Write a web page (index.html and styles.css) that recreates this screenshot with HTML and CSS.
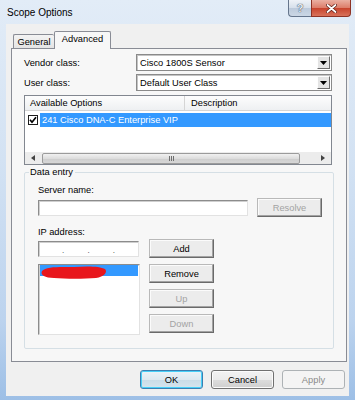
FILE: index.html
```html
<!DOCTYPE html>
<html lang="en">
<head>
  <meta charset="UTF-8" />
  <title>Scope Options</title>
  <link rel="stylesheet" href="styles.css">
</head>
<body>
  <div class="window">
    <div class="titlebar">
      <span class="caption">Scope Options</span>
      <div class="cap-buttons">
        <div class="cap-btn help">?</div>
        <div class="cap-btn close">
          <svg width="11" height="9" viewBox="0 0 11 9">
            <path d="M1.5 1 L9.5 8 M9.5 1 L1.5 8" stroke="#5a1a10" stroke-width="3.2" stroke-linecap="round"/>
            <path d="M1.5 1 L9.5 8 M9.5 1 L1.5 8" stroke="#fff" stroke-width="1.8" stroke-linecap="round"/>
          </svg>
        </div>
      </div>
    </div>

    <div class="client">
      <div class="tabs">
        <div class="tab general">General</div>
        <div class="tab active">Advanced</div>
      </div>

      <div class="panel">
        <div class="field-row">
          <span class="field-label">Vendor class:</span>
          <div class="combo">
            <span class="combo-text">Cisco 1800S Sensor</span>
            <span class="combo-btn">
              <svg width="7" height="4" viewBox="0 0 7 4"><path d="M0 0 H7 L3.5 4 Z" fill="#000"/></svg>
            </span>
          </div>
        </div>
        <div class="field-row">
          <span class="field-label">User class:</span>
          <div class="combo">
            <span class="combo-text">Default User Class</span>
            <span class="combo-btn">
              <svg width="7" height="4" viewBox="0 0 7 4"><path d="M0 0 H7 L3.5 4 Z" fill="#000"/></svg>
            </span>
          </div>
        </div>

        <div class="listview">
          <div class="lv-header">
            <div class="lv-col name">Available Options</div>
            <div class="lv-col desc">Description</div>
          </div>
          <div class="lv-body">
            <div class="lv-row">
              <span class="check">
                <svg width="8" height="8" viewBox="0 0 8 8"><path d="M1 3.8 L3 6.2 L7 1.2" stroke="#000" stroke-width="1.7" fill="none"/></svg>
              </span>
              <span class="lv-sel">241 Cisco DNA-C Enterprise VIP</span>
            </div>
          </div>
          <div class="hscroll">
            <span class="sb-arrow">
              <svg width="4" height="6" viewBox="0 0 4 6"><path d="M4 0 V6 L0 3 Z" fill="#444"/></svg>
            </span>
            <span class="sb-thumb"><span class="grip"></span><span class="grip"></span><span class="grip"></span></span>
            <span class="sb-track"></span>
            <span class="sb-arrow">
              <svg width="4" height="6" viewBox="0 0 4 6"><path d="M0 0 V6 L4 3 Z" fill="#444"/></svg>
            </span>
          </div>
        </div>

        <fieldset class="group">
          <legend>Data entry</legend>
          <div class="group-label">Server name:</div>
          <div class="input-row">
            <div class="textbox server"></div>
            <div class="btn disabled">Resolve</div>
          </div>
          <div class="group-label ip-label">IP address:</div>
          <div class="input-row ip-row">
            <div class="textbox ip">
              <span class="seg"></span><span class="dot">.</span>
              <span class="seg"></span><span class="dot">.</span>
              <span class="seg"></span><span class="dot">.</span>
              <span class="seg"></span>
            </div>
            <div class="btn">Add</div>
          </div>
          <div class="lower-row">
            <div class="listbox">
              <div class="lb-sel">
                <svg class="redact" width="68" height="15" viewBox="0 0 68 15">
                  <path d="M2 6 C6 1 22 2 34 2 C46 1 60 1 65 4 C68 7 64 12 56 13 C44 14 26 14 14 13 C5 13 0 10 2 6 Z" fill="#e8161c"/>
                </svg>
              </div>
            </div>
            <div class="side-buttons">
              <div class="btn">Remove</div>
              <div class="btn disabled">Up</div>
              <div class="btn disabled">Down</div>
            </div>
          </div>
        </fieldset>
      </div>

      <div class="dialog-buttons">
        <div class="dbtn default">OK</div>
        <div class="dbtn">Cancel</div>
        <div class="dbtn disabled">Apply</div>
      </div>
    </div>
  </div>
</body>
</html>
```

FILE: styles.css
```css
body {
  margin: 0;
  font-family: "Liberation Sans", Arial, sans-serif;
  font-size: 9.3px;
  color: #000;
}

.window {
  width: 355px;
  height: 400px;
  display: flex;
  flex-direction: column;
  background: linear-gradient(to bottom, #e2ecf7 0, #d3e2f3 40%, #bcd3ee 80%, #9dbfe6 100%);
}

/* title bar */

.titlebar {
  height: 24px;
  display: flex;
  align-items: flex-start;
}

.caption {
  flex: 1;
  margin: 7px 0 0 7px;
  font-size: 10px;
  line-height: 12px;
}

.cap-buttons {
  display: flex;
  margin-right: 4px;
}

.cap-btn {
  height: 17px;
  box-sizing: border-box;
  border: 1px solid #65758c;
  border-top: none;
  display: flex;
  align-items: center;
  justify-content: center;
}

.help {
  width: 23px;
  border-right: none;
  border-radius: 0 0 0 4px;
  background: linear-gradient(to bottom, #eef2f7 0, #d6dfea 50%, #bccadb 51%, #cbd7e5 100%);
  color: #e9eef5;
  font-weight: bold;
  font-size: 11px;
  text-shadow: 0 0 1px #3a4658, 0 0 1px #3a4658;
}

.close {
  width: 40px;
  border-color: #8e3325;
  border-radius: 0 0 4px 0;
  background: linear-gradient(to bottom, #eab0a2 0, #dc7c68 50%, #c8432c 51%, #d8735b 100%);
}

/* client area */

.client {
  flex: 1;
  margin: 0 6px 4px;
  padding: 7px 2px 7px 5px;
  background: #f0f0f0;
  display: flex;
  flex-direction: column;
}

.tabs {
  height: 17px;
  margin-left: 2px;
  display: flex;
  align-items: flex-end;
}

.tab {
  height: 14px;
  box-sizing: border-box;
  border: 1px solid #898c95;
  border-bottom: none;
  border-radius: 2px 2px 0 0;
  text-align: center;
  line-height: 14px;
  background: linear-gradient(to bottom, #f3f3f3, #e4e4e4);
}

.tab.general {
  width: 41px;
  border-right: none;
}

.tab.active {
  width: 57px;
  height: 18px;
  margin-bottom: -1px;
  line-height: 15px;
  background: #f7f7f7;
  position: relative;
  z-index: 1;
}

.panel {
  height: 314px;
  box-sizing: border-box;
  border: 1px solid #898c95;
  background: #f7f7f7;
  padding: 5px 14px 12px 12px;
  display: flex;
  flex-direction: column;
}

.field-row {
  height: 17px;
  display: flex;
  align-items: center;
}

.field-row + .field-row {
  margin-top: 3px;
}

.field-label {
  width: 112px;
}

.combo {
  width: 196px;
  height: 17px;
  box-sizing: border-box;
  border: 1px solid #8a8a8a;
  box-shadow: inset 1px 1px #c4c4c4;
  background: #fff;
  display: flex;
  align-items: center;
}

.combo-text {
  flex: 1;
  padding-left: 3px;
}

.combo-btn {
  width: 13px;
  height: 13px;
  margin-right: 1px;
  box-sizing: border-box;
  border: 1px solid;
  border-color: #fdfdfd #6d6d6d #6d6d6d #fdfdfd;
  background: #e4e4e4;
  display: flex;
  align-items: center;
  justify-content: center;
}

/* list view */

.listview {
  height: 70px;
  margin-top: 4px;
  box-sizing: border-box;
  border: 1px solid #828790;
  background: #fff;
  display: flex;
  flex-direction: column;
}

.lv-header {
  height: 15px;
  box-sizing: border-box;
  border-bottom: 1px solid #d5d5d5;
  background: linear-gradient(to bottom, #fdfdfd, #eef0f2);
  display: flex;
}

.lv-col {
  line-height: 14px;
  padding-left: 5px;
}

.lv-col.name {
  width: 160px;
  box-sizing: border-box;
  border-right: 1px solid #d5d5d5;
}

.lv-col.desc {
  padding-left: 6px;
}

.lv-body {
  flex: 1;
}

.lv-row {
  height: 14px;
  margin-top: 2px;
  display: flex;
  align-items: center;
}

.check {
  width: 10px;
  height: 10px;
  margin: 0 2px 0 3px;
  box-sizing: border-box;
  border: 1px solid #1c1c1c;
  background: #fff;
  display: flex;
  align-items: center;
  justify-content: center;
}

.lv-sel {
  flex: 1;
  height: 14px;
  line-height: 14px;
  padding-left: 2px;
  background: #3399ff;
  color: #fff;
}

.hscroll {
  height: 12px;
  display: flex;
  align-items: center;
  background: #ececec;
}

.sb-arrow {
  width: 16px;
  display: flex;
  justify-content: center;
}

.sb-thumb {
  width: 258px;
  height: 11px;
  margin-left: 1px;
  box-sizing: border-box;
  border: 1px solid #9b9b9b;
  border-radius: 2px;
  background: linear-gradient(to bottom, #f1f1f1 0, #dddddd 50%, #cdcdcd 51%, #d7d7d7 100%);
  display: flex;
  align-items: center;
  justify-content: center;
  gap: 1px;
}

.grip {
  width: 1px;
  height: 5px;
  background: #6e6e6e;
}

.sb-track {
  flex: 1;
}

/* data entry group */

.group {
  margin: 1px 0 0;
  padding: 0 11px 13px 13px;
  border: 1px solid #d5dfe5;
  border-radius: 2px;
}

.group legend {
  margin-left: -9px;
  padding: 0 2px 0 1px;
  line-height: 12px;
}

.group-label {
  margin-top: 6px;
  line-height: 12px;
}

.group-label.ip-label {
  margin-top: 9px;
}

.input-row {
  height: 19px;
  margin-top: 2px;
  display: flex;
  align-items: center;
}

.input-row.ip-row {
  margin-top: 1px;
}

.textbox {
  height: 16px;
  box-sizing: border-box;
  border: 1px solid;
  border-color: #8c8c8c #e2e2e2 #e2e2e2 #8c8c8c;
  box-shadow: inset 1px 1px #cfcfcf;
  background: #fff;
  margin-right: 10px;
}

.textbox.server {
  width: 210px;
  margin-right: 9px;
}

.textbox.ip {
  width: 101px;
  display: flex;
  align-items: flex-end;
  line-height: 10px;
}

.seg {
  flex: 1;
}

.dot {
  font-size: 8px;
  color: #333;
}

.btn {
  width: 65px;
  height: 19px;
  box-sizing: border-box;
  border: 1px solid;
  border-color: #b9b9b9 #6a6a6a #6a6a6a #b9b9b9;
  box-shadow: inset -1px -1px #a3a3a3, inset 1px 1px #fbfbfb;
  background: #ececec;
  display: flex;
  align-items: center;
  justify-content: center;
}

.btn.disabled {
  color: #a3a3a3;
}

.lower-row {
  margin-top: 6px;
  display: flex;
}

.listbox {
  width: 102px;
  height: 71px;
  box-sizing: border-box;
  border: 1px solid;
  border-color: #8c8c8c #e2e2e2 #e2e2e2 #8c8c8c;
  box-shadow: inset 1px 1px #cfcfcf;
  background: #fff;
  padding: 1px;
}

.lb-sel {
  height: 11px;
  margin-top: 1px;
  background: #3399ff;
}

.redact {
  display: block;
  margin-top: -2px;
}

.side-buttons {
  margin-left: 9px;
  display: flex;
  flex-direction: column;
  gap: 6px;
}

/* dialog buttons */

.dialog-buttons {
  margin-top: 8px;
  padding-right: 2px;
  display: flex;
  justify-content: flex-end;
  gap: 8px;
}

.dbtn {
  width: 63px;
  height: 19px;
  box-sizing: border-box;
  border: 1px solid #707070;
  border-radius: 3px;
  box-shadow: inset 0 0 0 1px #fbfbfb;
  background: linear-gradient(to bottom, #f2f2f2 0, #ebebeb 50%, #dddddd 51%, #cfcfcf 100%);
  display: flex;
  align-items: center;
  justify-content: center;
}

.dbtn.default {
  border-color: #3c7fb1;
  box-shadow: inset 0 0 0 1px #48d0f8;
  background: linear-gradient(to bottom, #eaf3f8 0, #dde9f0 50%, #c9dce7 51%, #d6e5ee 100%);
}

.dbtn.disabled {
  border-color: #adb2b5;
  box-shadow: none;
  background: #f4f4f4;
  color: #8a8a8a;
}
```
